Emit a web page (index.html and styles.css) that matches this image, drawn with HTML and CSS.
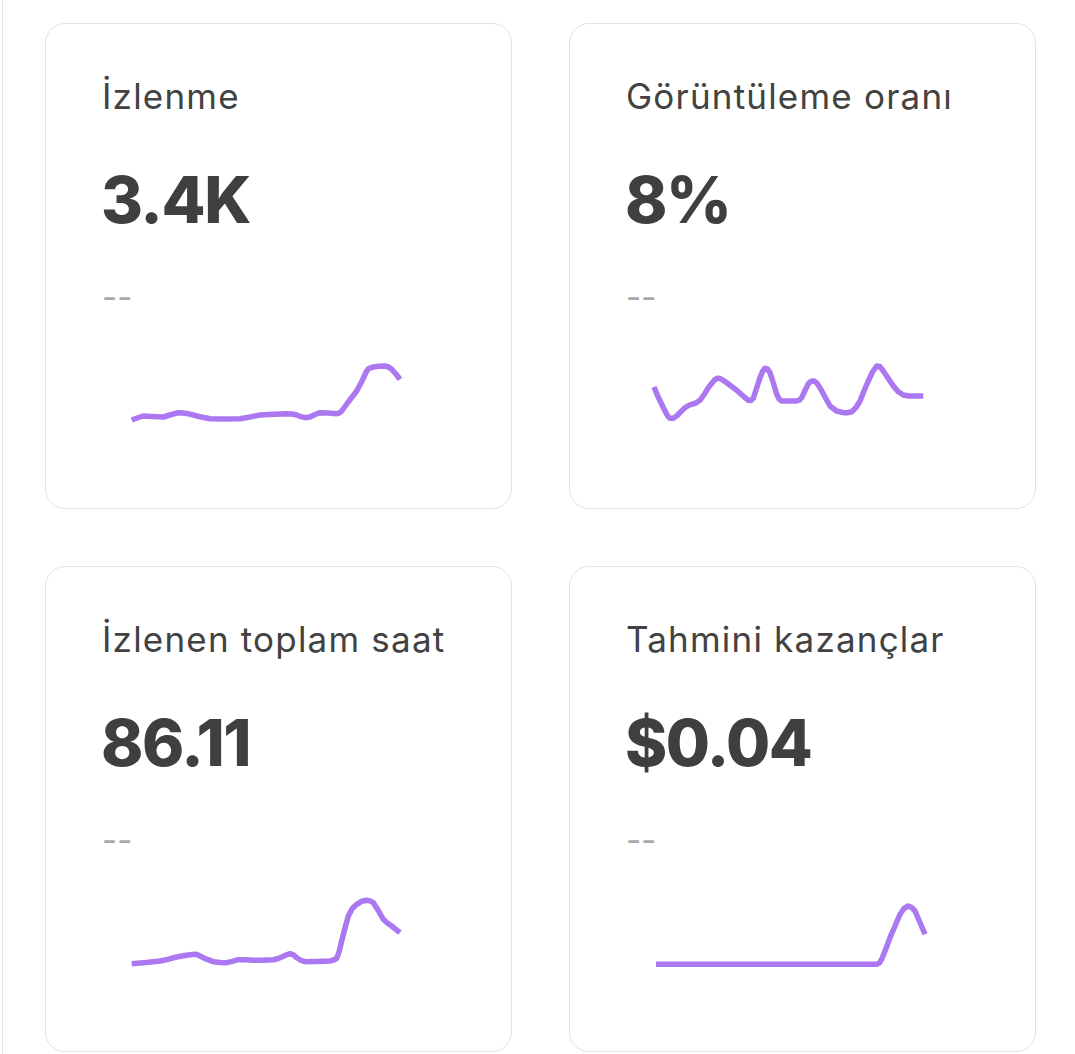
FILE: index.html
```html
<!DOCTYPE html>
<html lang="tr">
<head>
<meta charset="utf-8">
<title>Analytics</title>
<link rel="stylesheet" href="styles.css">
</head>
<body>
<div class="page">
  <div class="grid">
    <div class="card">
      <div class="title">İzlenme</div>
      <div class="value">3.4K</div>
      <div class="delta">--</div>
      <svg class="spark" width="360" height="100" viewBox="0 0 360 100">
        <polyline points="29.7,79 35,77 41.3,75 50,75.5 61.3,76 68,74 76.3,71.7 81,72 86,72.7 97,75.5 108,77.7 123,78 138,77.7 148,76 158,74 172,73.3 184.7,72.7 190,73 194.7,74 199,75.7 203,76.7 208,76 213,73.5 218,71.7 226,72 234.7,72.7 237.5,71.8 239.7,70 247,60 254.7,50 260,40 264.7,30 267,27.3 271.3,26 277,25.3 283,25 286.5,26 289.7,28.3 294,33 298,38.3"/>
      </svg>
    </div>
    <div class="card">
      <div class="title">Görüntüleme oranı</div>
      <div class="value">8%</div>
      <div class="delta">--</div>
      <svg class="spark" width="360" height="100" viewBox="0 0 360 100">
        <polyline points="28,46 31.5,54.5 35.7,63.3 39.5,71 42,75.5 44,77.3 47,77.3 50.7,75 54.5,71 59,66.7 62,64.7 65.7,63.3 70,62 74,59.3 78.5,53 82.3,46.7 86,42 89,38.5 91.3,37.3 94.3,37.6 97.3,39.3 104,44.3 110.7,49.3 116.5,54.5 122.3,59.3 125,59.4 127.3,57.3 130.5,47.5 134,36.7 136.5,30.5 139,27.3 141.5,28 144,31.7 147.5,42.5 150.7,53.3 153,58 155.7,60 163,60 170.7,60 173.5,59 175.7,56.7 179,49.5 182.3,42.7 185,40.2 188,40 191,42.3 194,46.7 199,56 204,65 210.5,70 217.3,71.7 221.5,71.7 225.7,70.7 230,66.5 234,60 238,50 242.3,40 246.5,31 250.7,25 253.8,25.5 257.3,30 262.3,37.5 267.3,45 272,50.5 277.3,54 283,55 290,55 297.3,55"/>
      </svg>
    </div>
    <div class="card">
      <div class="title">İzlenen toplam saat</div>
      <div class="value">86.11</div>
      <div class="delta">--</div>
      <svg class="spark" width="360" height="100" viewBox="0 0 360 100">
        <polyline points="29.7,79.7 44,78.6 58,77 66.5,75.2 74.7,73 84,71.3 93,70.3 95.5,70.8 98,72 104.5,75.2 111.3,77.7 118,78.6 124.7,78.7 130.5,77.3 136.3,75.7 143.5,75.8 151.3,76.3 161,76.2 171.3,75.7 175.5,74.8 179.7,73 184,71 188,69.7 191.5,70.9 194.7,73.7 198.8,76.3 203,77.7 215,77.5 228,77 231.5,76 234.7,74.3 237,68 239.7,57 243,44 246.3,32 250.3,24.5 254.7,20.3 259.5,17.3 264.7,16.3 268,16.9 271.3,18.7 276.3,26.5 281.3,35.3 285.3,39 289.7,42 293.8,45.3 298,48.7"/>
      </svg>
    </div>
    <div class="card">
      <div class="title">Tahmini kazançlar</div>
      <div class="value">$0.04</div>
      <div class="delta">--</div>
      <svg class="spark" width="360" height="100" viewBox="0 0 360 100">
        <polyline points="30,80.3 250.7,80.3 253.5,78.8 255.7,75.3 260,64.5 264,53.7 269,42 274,30.3 278,24.5 282.3,22 285.5,23.3 289,27 294,38.5 299,50.3"/>
      </svg>
    </div>
  </div>
</div>
</body>
</html>
```

FILE: styles.css
```css
* {
  box-sizing: border-box;
}

html, body {
  margin: 0;
  padding: 0;
  background: #ffffff;
}

body {
  font-family: "Inter", "Liberation Sans", sans-serif;
  color: #404040;
}

.page {
  margin-left: 2px;
  border-left: 1px solid #e2e2e2;
  min-height: 1054px;
  padding: 23px 0 0 42px;
}

.grid {
  display: grid;
  grid-template-columns: 467px 467px;
  grid-auto-rows: 486px;
  column-gap: 57px;
  row-gap: 57px;
}

.card {
  border: 1px solid #e3e3e3;
  border-radius: 20px;
  padding: 52px 56px 0 56px;
  display: flex;
  flex-direction: column;
  background: #ffffff;
}

.title {
  font-size: 35px;
  line-height: 40px;
  font-weight: 400;
  color: #424242;
  letter-spacing: 1.2px;
  white-space: nowrap;
}

.value {
  margin-top: 46px;
  margin-left: -1px;
  font-size: 64px;
  line-height: 76px;
  font-weight: 800;
  color: #3f3f3f;
  letter-spacing: -1.4px;
  white-space: nowrap;
}

.delta {
  margin-top: 39px;
  font-size: 33px;
  line-height: 40px;
  color: #a8a8a8;
}

.spark {
  display: block;
  margin-top: 24px;
}

.spark polyline {
  fill: none;
  stroke: #ac78f2;
  stroke-width: 5.5;
  stroke-linejoin: round;
  stroke-linecap: butt;
}
```
